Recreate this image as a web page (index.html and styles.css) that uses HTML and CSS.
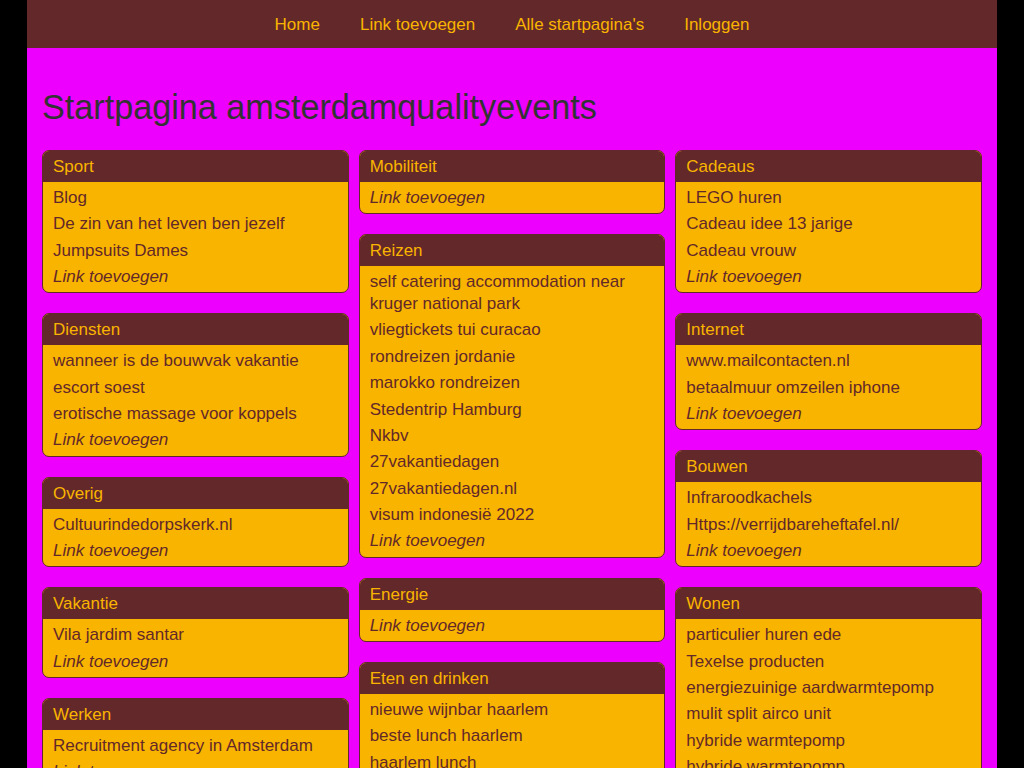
FILE: index.html
```html
<!DOCTYPE html>
<html lang="nl">
<head>
    <meta charset="UTF-8">
    <meta name="viewport" content="width=device-width, initial-scale=1.0">
    <title>Startpagina amsterdamqualityevents</title>
    <link rel="stylesheet" href="styles.css">
</head>
<body>
    <div class="page">
        <nav class="topnav">
            <a href="#">Home</a>
            <a href="#">Link toevoegen</a>
            <a href="#">Alle startpagina's</a>
            <a href="#">Inloggen</a>
        </nav>

        <div class="content">
            <h1 class="title">Startpagina amsterdamqualityevents</h1>

            <div class="columns">
                <div class="col">
                    <div class="card">
                        <div class="card-head">Sport</div>
                        <ul class="card-body">
                            <li><a href="#">Blog</a></li>
                            <li><a href="#">De zin van het leven ben jezelf</a></li>
                            <li><a href="#">Jumpsuits Dames</a></li>
                            <li class="add"><a href="#">Link toevoegen</a></li>
                        </ul>
                    </div>
                    <div class="card">
                        <div class="card-head">Diensten</div>
                        <ul class="card-body">
                            <li><a href="#">wanneer is de bouwvak vakantie</a></li>
                            <li><a href="#">escort soest</a></li>
                            <li><a href="#">erotische massage voor koppels</a></li>
                            <li class="add"><a href="#">Link toevoegen</a></li>
                        </ul>
                    </div>
                    <div class="card">
                        <div class="card-head">Overig</div>
                        <ul class="card-body">
                            <li><a href="#">Cultuurindedorpskerk.nl</a></li>
                            <li class="add"><a href="#">Link toevoegen</a></li>
                        </ul>
                    </div>
                    <div class="card">
                        <div class="card-head">Vakantie</div>
                        <ul class="card-body">
                            <li><a href="#">Vila jardim santar</a></li>
                            <li class="add"><a href="#">Link toevoegen</a></li>
                        </ul>
                    </div>
                    <div class="card">
                        <div class="card-head">Werken</div>
                        <ul class="card-body">
                            <li><a href="#">Recruitment agency in Amsterdam</a></li>
                            <li class="add"><a href="#">Link toevoegen</a></li>
                        </ul>
                    </div>
                </div>

                <div class="col">
                    <div class="card">
                        <div class="card-head">Mobiliteit</div>
                        <ul class="card-body">
                            <li class="add"><a href="#">Link toevoegen</a></li>
                        </ul>
                    </div>
                    <div class="card">
                        <div class="card-head">Reizen</div>
                        <ul class="card-body">
                            <li><a href="#">self catering accommodation near kruger national park</a></li>
                            <li><a href="#">vliegtickets tui curacao</a></li>
                            <li><a href="#">rondreizen jordanie</a></li>
                            <li><a href="#">marokko rondreizen</a></li>
                            <li><a href="#">Stedentrip Hamburg</a></li>
                            <li><a href="#">Nkbv</a></li>
                            <li><a href="#">27vakantiedagen</a></li>
                            <li><a href="#">27vakantiedagen.nl</a></li>
                            <li><a href="#">visum indonesië 2022</a></li>
                            <li class="add"><a href="#">Link toevoegen</a></li>
                        </ul>
                    </div>
                    <div class="card">
                        <div class="card-head">Energie</div>
                        <ul class="card-body">
                            <li class="add"><a href="#">Link toevoegen</a></li>
                        </ul>
                    </div>
                    <div class="card">
                        <div class="card-head">Eten en drinken</div>
                        <ul class="card-body">
                            <li><a href="#">nieuwe wijnbar haarlem</a></li>
                            <li><a href="#">beste lunch haarlem</a></li>
                            <li><a href="#">haarlem lunch</a></li>
                            <li class="add"><a href="#">Link toevoegen</a></li>
                        </ul>
                    </div>
                </div>

                <div class="col">
                    <div class="card">
                        <div class="card-head">Cadeaus</div>
                        <ul class="card-body">
                            <li><a href="#">LEGO huren</a></li>
                            <li><a href="#">Cadeau idee 13 jarige</a></li>
                            <li><a href="#">Cadeau vrouw</a></li>
                            <li class="add"><a href="#">Link toevoegen</a></li>
                        </ul>
                    </div>
                    <div class="card">
                        <div class="card-head">Internet</div>
                        <ul class="card-body">
                            <li><a href="#">www.mailcontacten.nl</a></li>
                            <li><a href="#">betaalmuur omzeilen iphone</a></li>
                            <li class="add"><a href="#">Link toevoegen</a></li>
                        </ul>
                    </div>
                    <div class="card">
                        <div class="card-head">Bouwen</div>
                        <ul class="card-body">
                            <li><a href="#">Infraroodkachels</a></li>
                            <li><a href="#">Https://verrijdbareheftafel.nl/</a></li>
                            <li class="add"><a href="#">Link toevoegen</a></li>
                        </ul>
                    </div>
                    <div class="card">
                        <div class="card-head">Wonen</div>
                        <ul class="card-body">
                            <li><a href="#">particulier huren ede</a></li>
                            <li><a href="#">Texelse producten</a></li>
                            <li><a href="#">energiezuinige aardwarmtepomp</a></li>
                            <li><a href="#">mulit split airco unit</a></li>
                            <li><a href="#">hybride warmtepomp</a></li>
                            <li><a href="#">hybride warmtepomp</a></li>
                            <li class="add"><a href="#">Link toevoegen</a></li>
                        </ul>
                    </div>
                </div>
            </div>
        </div>
    </div>
</body>
</html>
```

FILE: styles.css
```css
body {
    margin: 0;
    background-color: #000;
    font-family: "Liberation Sans", Arial, sans-serif;
    font-size: 17px;
    color: #632829;
}
a {
    color: inherit;
    text-decoration: none;
}
.page {
    width: 970px;
    margin: 0 auto;
    min-height: 100vh;
    background-color: #ee00ff;
}
.topnav {
    display: flex;
    justify-content: center;
    align-items: center;
    gap: 40px;
    height: 47px;
    padding-top: 1px;
    background-color: #632829;
}
.topnav a {
    color: #f9b400;
    font-size: 17px;
}
.content {
    padding: 0 15px;
}
.title {
    margin: 0;
    padding: 38px 0 22px;
    font-size: 34.2px;
    font-weight: normal;
    line-height: 42px;
    color: #333;
}
.columns {
    display: grid;
    grid-template-columns: repeat(3, 1fr);
    gap: 10px;
    align-items: start;
}
.card {
    border: 1px solid #632829;
    border-radius: 7px;
    background-color: #f9b400;
    overflow: hidden;
    margin-bottom: 20px;
}
.card-head {
    background-color: #632829;
    color: #f9b400;
    padding: 3px 10px 2px;
    line-height: 26px;
}
.card-body {
    list-style: none;
    margin: 0;
    padding: 2.6px 10px 2.3px;
}
.card-body li {
    line-height: 22px;
    padding: 2.2px 0;
}
.card-body .add {
    font-style: italic;
}
```
